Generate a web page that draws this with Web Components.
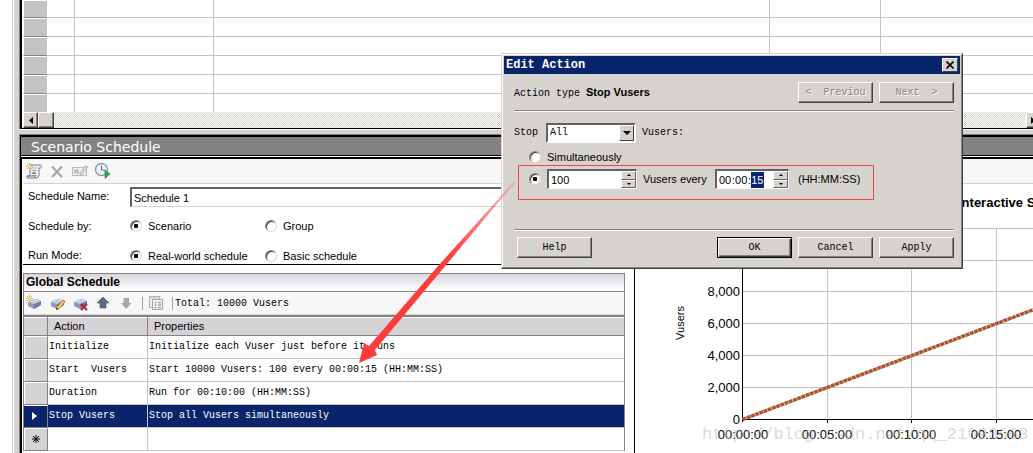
<!DOCTYPE html>
<html lang="en">
<head>
<meta charset="utf-8">
<title>Scenario Schedule</title>
<style>
  body { margin: 0; background: #fff; overflow: hidden; }
</style>
</head>
<body>
<scenario-window></scenario-window>

<script>
const COMMON = `
  :host { display: block; box-sizing: border-box; --face: #d6d3ce; --dark: #848284; --navy: #08246b;
    --sans: "Liberation Sans", Arial, sans-serif; --mono: "Liberation Mono", "Courier New", monospace;
    font: 11px/16px var(--sans); color: #000; }
  *, *::before { box-sizing: border-box; }
  button, input, select { font: inherit; color: inherit; margin: 0; padding: 0; border-radius: 0; }
  input[type=radio] { appearance: none; flex: none; width: 12px; height: 12px; border-radius: 50%; background: #fff;
    border: 1px solid; border-color: #848284 #dedbd6 #dedbd6 #848284; box-shadow: inset 1px 1px 0 #424142; display: grid; place-items: center; }
  input[type=radio]:checked::before { content: ""; width: 4px; height: 4px; border-radius: 1px; background: #000; }
`;
function define(name, markup, init) {
  const t = document.createElement("template");
  t.innerHTML = markup;
  customElements.define(name, class extends HTMLElement {
    constructor() {
      super();
      this.attachShadow({ mode: "open" }).append(t.content.cloneNode(true));
    }
    connectedCallback() { if (init) init(this, this.shadowRoot); }
  });
}

/* Raised push button */
define("push-button", `<style>${COMMON}
  :host { flex: none; width: 75px; height: 21px; font: 10px/16px var(--mono); }
  button { width: 100%; height: 100%; background: var(--face); white-space: pre; border: 1px solid; border-color: #fff #424142 #424142 #fff;
    box-shadow: inset -1px -1px 0 var(--dark); display: block; text-align: center; }
  button:disabled { color: var(--dark); text-shadow: 1px 1px 0 #fff; }
  :host([primary]) button { border-color: #000; box-shadow: inset 1px 1px 0 #fff, inset -1px -1px 0 #424142, inset -2px -2px 0 var(--dark); }
</style><button type="button"><slot></slot></button>`,
(el, root) => { root.querySelector("button").disabled = el.hasAttribute("disabled"); });

/* Up/down arrows at the right side of a number box */
define("spin-arrows", `<style>${COMMON}
  :host { flex: none; width: 15px; height: 100%; display: grid; grid-template-rows: 1fr 1fr; background: var(--face); }
  button { background: var(--face); border: 1px solid; border-color: #fff #636163 #636163 #fff; display: grid; place-items: center; min-height: 0; }
  svg { display: block; }
</style>
<button type="button" aria-label="Up"><svg width="4" height="2"><path d="M0 2 2 0 4 2z"/></svg></button>
<button type="button" aria-label="Down"><svg width="4" height="2"><path d="M0 0 2 2 4 0z"/></svg></button>`);

/* Toolbar glyphs */
const BRICK = `<path d="M2 7 9 4 15 6V10L8 14 2 11z" fill="#8c9ab5"/><path d="M2 7 9 4 15 6 8 9z" fill="#d3dbe8"/><path d="M8 9 15 6V10L8 14z" fill="#6d7f9f"/><ellipse cx="6" cy="6.500" rx="2" ry="1.200" fill="#eef2f8" stroke="#8c9ab5" stroke-width=".6"/><ellipse cx="10.500" cy="5.300" rx="2" ry="1.200" fill="#eef2f8" stroke="#8c9ab5" stroke-width=".6"/>`;
const SPARK = `<path d="M3.500 0v7M0 3.500h7M1 1l5 5M6 1 1 6" stroke="#e0b04a" stroke-width="1"/><circle cx="3.500" cy="3.500" r="1.200" fill="#fff2b0"/>`;
const GLYPHS = {
  new: `<path d="M4 2h11v3h-2v8l-2 2H1v-2h3z" fill="#eef2fa" stroke="#6f7fa3"/><path d="M6 5h5M6 7.500h5M6 12.500h5" stroke="#d3a24d"/><path d="M6 11c0-3 4-3 4 0z" fill="#7386ad"/><path d="M13 2v3h2V2z" fill="#b7c3dc"/><path d="M1 13h8v2" fill="none" stroke="#6f7fa3"/>${SPARK}`,
  remove: `<path d="M3 3.500 13 14M13 3.500 3 14" stroke="#a5a2a5" stroke-width="2"/>`,
  rename: `<rect x=".5" y="4.500" width="14" height="8" fill="#eee" stroke="#bdbabd"/><path d="M3 11V7h3v4M3 9h3" fill="none" stroke="#a5a2a5"/><path d="M15 3 8 12" stroke="#bdbabd" stroke-width="3"/><path d="M14.500 4 9 11" stroke="#f4f4f4"/>`,
  clock: `<circle cx="6.500" cy="6.500" r="6" fill="#eef3fb" stroke="#8b97b0" stroke-width="1.300"/><path d="M6.500 2.500V7H10" fill="none" stroke="#59688a"/><path d="M10 7 15 11 10 15.500z" fill="#35a84a" stroke="#1d7a32" stroke-width=".6"/>`,
  brickNew: BRICK + SPARK,
  brickEdit: BRICK + `<path d="M15 6 8 14" stroke="#b97a2b" stroke-width="3"/><path d="M15 6 8.500 13.500" stroke="#ffd75e" stroke-width="1.600"/><path d="m7 15 .5-2.500 2 1.500z" fill="#333"/><path d="m14 5 2 2" stroke="#d66" stroke-width="1.500"/>`,
  brickDel: BRICK + `<path d="m9 9 6 6M15 9l-6 6" stroke="#b5213c" stroke-width="2"/>`,
  up: `<path d="M8 2 14 8H11V13H5V8H2z" fill="#5d6a85" stroke="#46516a" stroke-width=".6"/>`,
  down: `<path d="M8 14 13.500 8H11V3H5.500V8H3z" fill="#a5a6a8"/>`,
  pages: `<rect x="1.500" y="1.500" width="10" height="11" fill="#eee" stroke="#b5b2b5"/><rect x="4.500" y="4.500" width="10" height="10" fill="#f4f4f4" stroke="#a5a2a5"/><path d="M4 2v2M7 2v2M10 2v2" stroke="#b5b2b5"/><path d="M6.500 7.500h2M10 7.500h3M6.500 10h2M10 10h3M6.500 12.500h2M10 12.500h3" stroke="#a5a2a5" stroke-width="1.400"/>`
};
define("tool-button", `<style>${COMMON}
  :host { flex: none; width: 16px; height: 16px; }
  button { display: block; width: 16px; height: 16px; border: 0; background: none; }
  svg { display: block; }
</style><button type="button"><svg width="16" height="16" viewBox="0 0 16 16"></svg></button>`,
(el, root) => {
  root.querySelector("svg").innerHTML = GLYPHS[el.getAttribute("glyph")];
  root.querySelector("button").setAttribute("aria-label", el.getAttribute("label"));
});

/* Empty scenario grid with its horizontal scroll bar */
define("group-grid", `<style>${COMMON}
  :host { border-bottom: 1px solid #000; overflow: hidden; }
  table { width: 100%; table-layout: fixed; border-collapse: separate; border-spacing: 0; }
  th, td { padding: 0; height: 19px; border: 0 solid #c6c3c6; }
  td { border-width: 0 1px 1px 0; }
  td:nth-child(2) { border-right-color: #c6c3c6; }
  td:last-child { border-right: 0; }
  th { background: #c6c3c6; border: 1px solid; border-color: #fff #c6c3c6 var(--dark) #fff; }
  tr:first-child > * { height: 18px; }
  tr:last-child > * { height: 18px; border-bottom: 0; }
  .bar { display: flex; height: 16px; background: conic-gradient(#fff 25%, var(--face) 0 50%, #fff 0 75%, var(--face) 0) 0 0 / 2px 2px; }
  .bar button { flex: none; width: 15px; height: 16px; background: var(--face); border: 1px solid; border-color: #fff #424142 #424142 #fff;
    box-shadow: inset -1px -1px 0 var(--dark); display: grid; place-items: center; }
  .bar .thumb { width: 16px; }
  .bar .right { margin: 0 -8px 0 auto; }
</style>
<table aria-label="Scenario groups">
  <colgroup><col style="width:24px"><col style="width:28px"><col style="width:139px"><col><col style="width:111px"><col style="width:152px"></colgroup>
  <tbody></tbody>
</table>
<div class="bar">
  <button type="button" aria-label="Scroll left"><svg width="4" height="7"><path d="M4 0 0 3.500 4 7z"/></svg></button>
  <button type="button" class="thumb" aria-label="Scroll position"></button>
  <button type="button" class="right" aria-label="Scroll right"><svg width="6" height="7"><path d="M0 0 4 3.500 0 7z"/></svg></button>
</div>`,
(el, root) => {
  root.querySelector("tbody").innerHTML = `<tr><th></th><td></td><td></td><td></td><td></td><td></td></tr>`.repeat(6);
});

/* Schedule name, schedule-by and run-mode fields */
define("schedule-form", `<style>${COMMON}
  :host { padding-left: 5px; border-bottom: 1px solid #000; background: #fff; overflow: hidden; }
  form { display: grid; grid-template-columns: 102px minmax(0, 1fr); grid-template-rows: 23px 38px 19px; align-items: center; }
  .name { align-self: end; height: 20px; width: 100%; padding: 0 2px; background: #fff; border: solid; border-width: 2px 1px 1px 2px;
    border-color: #636163 #d6d3ce #d6d3ce #636163; outline: 0; }
  .opts { display: flex; }
  .opts label { display: flex; align-items: center; gap: 6px; width: 135px; }
  .low { align-self: end; }
</style>
<form>
  <label for="n">Schedule Name:</label><input id="n" class="name" type="text" value="Schedule 1">
  <span id="by">Schedule by:</span>
  <div class="opts" role="radiogroup" aria-labelledby="by">
    <label><input type="radio" name="by" checked>Scenario</label><label><input type="radio" name="by">Group</label>
  </div>
  <span id="rm">Run Mode:</span>
  <div class="opts low" role="radiogroup" aria-labelledby="rm">
    <label><input type="radio" name="rm" checked>Real-world schedule</label><label><input type="radio" name="rm">Basic schedule</label>
  </div>
</form>`);

/* Table of scheduled actions */
define("global-schedule", `<style>${COMMON}
  :host { border: 1px solid var(--dark); border-bottom: 0; background: #fff; }
  h2 { margin: 0; height: 18px; padding-left: 2px; font: bold 12px/17px var(--sans); background: linear-gradient(#d9d6dc, #fff); border-bottom: 1px solid var(--dark); }
  .tools { display: flex; align-items: center; height: 23px; padding: 0 2px; gap: 7px; background: #f7f7f7; border-bottom: 1px solid #d6d3ce; font: 10px/16px var(--mono); }
  .sep { width: 1px; height: 13px; background: #a5a2a5; margin-left: 1px; margin-right: -2px; }
  .total { border-left: 1px solid #a5a2a5; padding-left: 2px; line-height: 13px; margin-left: 1px; }
  table { width: 100%; table-layout: fixed; border-collapse: separate; border-spacing: 0; border-top: 2px solid var(--dark); font: 10px/16px var(--mono); }
  th, td { padding: 0; text-align: left; white-space: pre; overflow: hidden; }
  td { height: 23px; padding-left: 1px; border: 0 solid #c6c3c6; border-width: 0 1px 1px 0; }
  td:last-child, thead th:last-child { border-right: 0; }
  thead th { height: 19px; padding-left: 6px; background: #d6d3d6; font: 11px/16px var(--sans); border: solid var(--dark); border-width: 0 1px 1px 0; box-shadow: inset 0 1px 0 #fff; }
  tbody th { background: #d6d3d6; text-align: center; border: 1px solid; border-color: #fff var(--dark) var(--dark) #fff; }
  svg { display: inline-block; vertical-align: middle; }
  tr.sel > * { background: var(--navy); color: #fff; border-left-color: var(--navy); }
</style>
<h2>Global Schedule</h2>
<div class="tools">
  <tool-button glyph="brickNew" label="Add action"></tool-button><tool-button glyph="brickEdit" label="Edit action"></tool-button>
  <tool-button glyph="brickDel" label="Delete action"></tool-button><tool-button glyph="up" label="Move up"></tool-button>
  <tool-button glyph="down" label="Move down"></tool-button><span class="sep"></span>
  <tool-button glyph="pages" label="Show grid"></tool-button><span class="total">Total: 10000 Vusers</span>
</div>
<table>
  <colgroup><col style="width:24px"><col style="width:100px"><col></colgroup>
  <thead><tr><th></th><th>Action</th><th>Properties</th></tr></thead>
  <tbody>
    <tr><th></th><td>Initialize</td><td>Initialize each Vuser just before it runs</td></tr>
    <tr><th></th><td>Start  Vusers</td><td>Start 10000 Vusers: 100 every 00:00:15 (HH:MM:SS)</td></tr>
    <tr><th></th><td>Duration</td><td>Run for 00:10:00 (HH:MM:SS)</td></tr>
    <tr class="sel"><th><svg width="12" height="10"><path d="M2 1 7 5 2 9z" fill="#fff"/></svg></th><td>Stop Vusers</td><td>Stop all Vusers simultaneously</td></tr>
    <tr><th><svg width="10" height="10"><path d="M5 1v8M1 5h8M2 2l6 6M8 2 2 8" stroke="#000"/></svg></th><td></td><td></td></tr>
  </tbody>
</table>`);

/* Line chart of running Vusers */
define("schedule-chart", `<style>${COMMON}
  :host { border-left: 1px solid #000; background: #fff; overflow: hidden; min-width: 0; }
  svg { display: block; width: 100%; height: 269px; }
  text { font: 13px var(--sans); }
  .title { font-weight: bold; }
  .axis { font-size: 11px; }
</style>
<svg role="img" aria-label="Interactive Schedule Graph">
  <g stroke="#c6c3c6" fill="none" shape-rendering="crispEdges">
    <path d="M107 44.500H700M107 76.500H700M107 107.500H700M107 139.500H700M107 171.500H700M107 203.500H700M192.500 44V235M276.500 44V235M361.500 44V235"/>
    <path stroke="#000" d="M107.500 44V238M107 235.500H700M192.500 235v4M276.500 235v4M361.500 235v4"/>
  </g>
  <path d="M107.500 235.500 530 76" stroke="#ad5531" stroke-width="3.500" stroke-dasharray="4 .5"/>
  <text class="title" x="323" y="23">Interactive Schedule Graph</text>
  <g text-anchor="end"><text x="105" y="112">8,000</text><text x="105" y="144">6,000</text><text x="105" y="176">4,000</text><text x="105" y="208">2,000</text><text x="105" y="240">0</text></g>
  <g text-anchor="middle"><text x="108" y="255">00:00:00</text><text x="192" y="255">00:05:00</text><text x="276" y="255">00:10:00</text><text x="361" y="255">00:15:00</text></g>
  <text class="axis" text-anchor="middle" transform="translate(49 139) rotate(-90)">Vusers</text>
</svg>`);

/* Edit Action dialog window */
define("edit-action-dialog", `<style>${COMMON}
  :host { width: 462px; background: var(--face); border: 1px solid; border-color: #d6d3ce #424142 #424142 #d6d3ce; }
  .frame { border: 1px solid; border-color: #fff var(--dark) var(--dark) #fff; padding: 1px; }
  header { display: flex; align-items: center; height: 18px; padding: 0 2px; background: var(--navy); color: #fff; font: bold 12px/16px var(--mono); }
  h1 { margin: 0; flex: 1; font: inherit; }
  header button { width: 16px; height: 14px; background: var(--face); border: 1px solid; border-color: #fff #424142 #424142 #fff; display: grid; place-items: center; }
  .body { padding: 8px 6px 8px 10px; }
  .row { display: flex; align-items: center; }
  .mono { font: 10px/16px var(--mono); }
  .push { flex: 1; }
  .line { border: 0; border-top: 1px solid var(--dark); border-bottom: 1px solid #fff; height: 2px; margin: 7px 0 11px; }
  .foot-line { margin: 40px 0 6px; }
  .box { display: flex; align-items: center; height: 20px; background: #fff; border: 2px solid; border-color: #636163 #fff #fff #636163; border-right-width: 1px; border-bottom-width: 1px; }
  .box input { min-width: 0; border: 0; background: none; outline: 0; }
  .select { position: relative; width: 90px; height: 20px; margin: 0 6px 0 8px; }
  select { appearance: none; width: 90px; height: 20px; padding: 0 2px; background: #fff; border: 2px solid; border-color: #636163 #fff #fff #636163; outline: 0; }
  .drop { position: absolute; right: 2px; top: 2px; width: 15px; height: 16px; background: var(--face); border: 1px solid; border-color: #fff #424142 #424142 #fff; display: grid; place-items: center; pointer-events: none; }
  .radio { padding-left: 15px; gap: 6px; }
  .first { margin: 6px 0 4px; height: 16px; }
  .count { width: 90px; padding-left: 2px; }
  .count input { flex: 1; }
  .every { width: 66px; }
  .time { width: 74px; padding-left: 2px; }
  .time input { width: 13px; }
  .time .on { background: var(--navy); color: #fff; }
  .time spin-arrows { margin-left: auto; }
  .hint { padding-left: 3px; }
  .foot { gap: 6px; padding-left: 3px; }
</style>
<div class="frame" role="dialog" aria-labelledby="t">
  <header><h1 id="t">Edit Action</h1><button type="button" aria-label="Close"><svg width="8" height="8"><path d="M.5.500 7.500 7.500M7.500.500.500 7.500" stroke="#000" stroke-width="1.600"/></svg></button></header>
  <div class="body">
    <div class="row" style="gap:6px"><span class="mono">Action type <b style="font:bold 11px/16px var(--sans)">Stop Vusers</b></span><span class="push"></span>
      <push-button disabled>&lt;  Previou</push-button><push-button disabled>Next  &gt;</push-button></div>
    <hr class="line">
    <div class="row mono"><label for="who">Stop</label><div class="select"><select id="who"><option>All</option></select><span class="drop"><svg width="8" height="4"><path d="M0 0H8L4 4z"/></svg></span></div><span>Vusers:</span></div>
    <div class="row radio first"><input type="radio" name="how" id="sim"><label for="sim">Simultaneously</label></div>
    <div class="row radio"><input type="radio" name="how" id="grad" checked aria-label="Gradually">
      <div class="box count"><input type="text" value="100" aria-label="Number of Vusers"><spin-arrows></spin-arrows></div>
      <label class="every" for="grad">Vusers every</label>
      <div class="box time"><input type="text" value="00" aria-label="Hours">:<input type="text" value="00" aria-label="Minutes">:<input class="on" type="text" value="15" aria-label="Seconds"><spin-arrows></spin-arrows></div>
      <span class="hint">(HH:MM:SS)</span></div>
    <hr class="line foot-line">
    <div class="row foot"><push-button>Help</push-button><span class="push"></span><push-button primary>OK</push-button><push-button>Cancel</push-button><push-button>Apply</push-button></div>
  </div>
</div>`);

/* Red callout marks and the site watermark, drawn over everything */
define("callout-layer", `<style>${COMMON}
  svg { display: block; width: 100%; height: 100%; }
  text { font: 17px var(--mono); }
</style>
<svg>
  <defs><linearGradient id="fade" gradientUnits="userSpaceOnUse" x1="514" y1="182" x2="450" y2="258"><stop offset="0" stop-color="#ff3c3c" stop-opacity=".3"/><stop offset="1" stop-color="#ff3c3c"/></linearGradient></defs>
  <rect x="518.500" y="165.500" width="355" height="34" fill="none" stroke="#f04848"/>
  <path d="M359 363 364 343 369 346 439 265 514 181.500 515 182.500 446 265 375 350 377 355z" fill="url(#fade)"/>
  <text x="702" y="439" fill="#b5b8a8" fill-opacity=".5">http://blog.csdn.net/qq_21093663</text>
</svg>`);

define("scenario-window", `<style>${COMMON}
  :host { position: relative; min-height: 100vh; padding-left: 12px; background: #fff; overflow: hidden; }
  .edge { border-left: 1px solid #d6d3ce; padding-left: 1px; }
  .face { background: var(--face); padding-left: 5px; }
  .top { border-left: 1px solid var(--dark); }
  .top > group-grid { border-left: 2px solid #000; padding-left: 1px; background: #fff; }
  .gap { height: 5px; border-top: 1px solid #fff; }
  .panel { border: 0 solid var(--dark); border-width: 1px 0 0 1px; }
  .inner { border: 0 solid #000; border-width: 2px 0 0 1px; min-height: calc(100vh - 135px); background: #fff; }
  h2 { margin: 0; height: 18px; padding-left: 10px; background: var(--dark); color: #fff; font: 14px/20px "DejaVu Sans", Verdana, sans-serif; }
  .rule { height: 4px; border: solid #000; border-width: 1px 0 2px; background: #fff; }
  .content { border-left: 1px solid #000; padding-left: 1px; }
  .tools { display: flex; align-items: center; gap: 7px; height: 25px; padding: 0 3px; background: #f7f7f7; border-bottom: 1px solid #d6d3ce; }
  .split { display: grid; grid-template-columns: minmax(0, 611fr) minmax(0, 399fr); }
  global-schedule { margin: 8px 9px 0 0; }
  edit-action-dialog { position: absolute; left: 501px; top: 53px; }
  callout-layer { position: absolute; inset: 0; pointer-events: none; }
</style>
<div class="edge"><div class="face">
  <div class="top"><group-grid></group-grid></div>
  <div class="gap"></div>
  <section class="panel"><div class="inner">
    <h2>Scenario Schedule</h2><div class="rule"></div>
    <div class="content">
      <div class="tools"><tool-button glyph="new" label="New schedule"></tool-button><tool-button glyph="remove" label="Delete schedule"></tool-button><tool-button glyph="rename" label="Rename schedule"></tool-button><tool-button glyph="clock" label="Start time"></tool-button></div>
      <div class="split"><div><schedule-form></schedule-form><global-schedule></global-schedule></div><schedule-chart></schedule-chart></div>
    </div>
  </div></section>
</div></div>
<edit-action-dialog></edit-action-dialog>
<callout-layer></callout-layer>`);
</script>
</body>
</html>
